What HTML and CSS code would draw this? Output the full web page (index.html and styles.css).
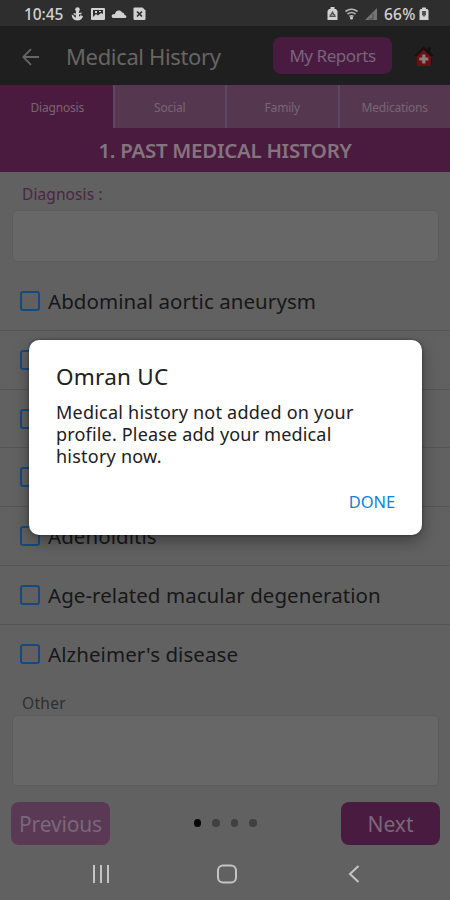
FILE: index.html
```html
<!DOCTYPE html>
<html lang="en">
<head>
<meta charset="utf-8">
<title>Medical History</title>
<link rel="stylesheet" href="styles.css">
</head>
<body>
<div class="phone">
  <div class="status">
    <span class="time">10:45</span>
    <svg class="st-left" width="80" height="16" viewBox="0 0 80 16" fill="#d2d2d2">
      <circle cx="7.500" cy="3.500" r="2.300"/><path d="M6 4h3v3l2.500-.5v1.500L9 8.500v2l1.500-.5-.3-1.500 2.800 2-.5 1c-1 2-2.500 3-5 3s-4.500-1-5.500-3.500l-.3-2.500 2.800 1.500-.5 1 2 .5-.3-2.500-2-.5v-1.500l2.300.5z"/>
      <path fill-rule="evenodd" d="M22 2h12a1 1 0 0 1 1 1v10a1 1 0 0 1-1 1H22a1 1 0 0 1-1-1V3a1 1 0 0 1 1-1zm1 2v7l3-3 2 1.500L31 7l2 1V4zm2 1h2v2h-2zm4 0h2v1h-2z"/>
      <path d="M43 12a2 2 0 0 1-.5-3.500l2.500-.5c.5-4 5.500-4.500 7-1.500 2 0 2.500 1.500 2.500 2.500 2.500.2 2.500 3 .5 3z"/>
      <path d="M64.500 1.500h8l3 3V13a1 1 0 0 1-1 1h-10a1 1 0 0 1-1-1V2.500a1 1 0 0 1 1-1z"/>
      <path d="m67 5.500 5 5m0-5-5 5" stroke="#2e2e2e" stroke-width="1.700"/>
    </svg>
    <svg class="st-right" width="52" height="16" viewBox="0 0 52 16" fill="#d2d2d2">
      <path d="M3 3h1.500V1h4v2H10l1.500 2v9h-10V5z"/><path d="M4 10.500 6.500 6 9 10.500zM3.500 9h6" fill="none" stroke="#555" stroke-width="1.200"/>
      <g fill="none" stroke="#b8b8b8" stroke-width="1.600"><path d="M19.500 5.500q6-4.500 12 0M21.500 8q4-3 8 0M23.500 10.500q2-1.500 4 0"/></g><circle cx="25.500" cy="12" r="1.500"/>
      <path d="M51 2v12H39z" fill="#757575"/><path d="M47 8v5h-4" fill="none" stroke="#4a4a4a"/>
    </svg>
    <span class="pct">66%</span>
    <svg class="batt" width="10" height="14" viewBox="0 0 10 14"><path d="M1.500 2H3V.500h4V2h1.500L9.500 3.500V13h-9V3.500z" fill="#d2d2d2"/><path d="M3 4h4v3.500L5 10 3 7.500z" fill="#555"/></svg>
  </div>
  <header class="bar">
    <svg class="back" width="18" height="18" viewBox="0 0 18 18" fill="none" stroke="#666" stroke-width="1.800"><path d="M17 9H1.500M9 1.200 1.300 9 9 16.800"/></svg>
    <h1>Medical History</h1>
    <button class="reports">My Reports</button>
    <svg class="home" width="20" height="22" viewBox="0 0 20 22"><path d="M9.500.5 0.500 10H2.500v9h15v-9h2L16.500 7V1.500h-3v2.500z" fill="#150f0f"/><path d="m9.500 3.500-8 8h1v7q0 1.500 1.500 1.500h11.500q1.500 0 1.500-1.500v-7h1z" fill="#691012"/><path d="M9.800 8.500v9M5.300 13h9" stroke="#8b7e7e" stroke-width="3.200"/></svg>
  </header>
  <nav class="tabs"><span class="on">Diagnosis</span><span>Social</span><span>Family</span><span>Medications</span></nav>
  <h2><span>1. PAST MEDICAL HISTORY</span></h2>
  <main>
    <label class="lab diag">Diagnosis :</label>
    <div class="field"></div>
    <ul>
      <li><i></i><span>Abdominal aortic aneurysm</span></li>
      <li><i></i></li>
      <li><i></i></li>
      <li><i></i></li>
      <li><i></i><span>Adenoiditis</span></li>
      <li><i></i><span>Age-related macular degeneration</span></li>
      <li><i></i><span>Alzheimer's disease</span></li>
    </ul>
    <label class="lab other">Other</label>
    <div class="field tall"></div>
  </main>
  <footer>
    <button class="prev">Previous</button>
    <div class="dots"><b class="cur"></b><b></b><b></b><b></b></div>
    <button class="next">Next</button>
  </footer>
  <div class="sysnav">
    <svg width="18" height="20" viewBox="0 0 18 20" stroke="#c4c4c4" stroke-width="2"><path d="M2 1v18M9 1v18M16 1v18"/></svg>
    <svg class="homekey" width="20" height="20" viewBox="0 0 20 20" fill="none" stroke="#c4c4c4" stroke-width="2"><rect x="1" y="1.500" width="18" height="17" rx="5"/></svg>
    <svg width="12" height="20" viewBox="0 0 12 20" fill="none" stroke="#c4c4c4" stroke-width="2"><path d="M10.500 2 2 10l8.500 8"/></svg>
  </div>
  <div class="dialog">
    <h3>Omran UC</h3>
    <p>Medical history not added on your<br><span class="p2">profile. Please add your medical</span><br>history now.</p>
    <div class="act"><span>DONE</span></div>
  </div>
</div>
</body>
</html>
```
FILE: styles.css
```css
* { box-sizing: border-box; }
body { margin: 0; }
h1, h2, h3, p, ul { margin: 0; padding: 0; font-weight: 400; }
button { border: 0; padding: 0; font: inherit; }
.phone { position: relative; width: 450px; height: 900px; overflow: hidden; display: flex; flex-direction: column; background: #616161; font-family: "Noto Sans", sans-serif; white-space: nowrap; }
.status { height: 26px; flex: none; background: #2e2e2e; display: flex; align-items: center; padding: 2px 0 0 24px; color: #d2d2d2; font-size: 15.500px; font-weight: 500; }
.time { width: 46px; letter-spacing: -0.1px; }
.st-right { margin-left: 176px; }
.pct { margin-left: 6px; width: 35px; letter-spacing: 0.2px; }
.bar { height: 59px; flex: none; background: #1f1f1f; display: flex; align-items: center; padding: 0 16px 0 22px; color: #666; }
.bar h1 { margin-left: 26px; width: 207px; font-size: 22px; letter-spacing: -0.35px; line-height: 30px; padding-top: 1px; }
.back { position: relative; top: 1px; }
.reports { width: 119px; height: 37px; border-radius: 8px; background: #4a1b40; color: #79657a; font-size: 17px; letter-spacing: -0.45px; }
.home { margin-left: 22px; flex: none; position: relative; top: 1px; }
.tabs { height: 43px; flex: none; display: flex; background: #553850; color: #786575; font-size: 12px; letter-spacing: -0.2px; }
.tabs span { flex: 1; display: flex; align-items: center; justify-content: center; border-left: 2px solid #604760; padding-top: 1px; }
.tabs .on { background: #4a1b3e; border-left-color: #4a1b3e; }
h2 { height: 44px; flex: none; background: #4a1b3e; color: #84747f; font-size: 20.500px; font-weight: 600; line-height: 45px; text-align: center; letter-spacing: -0.3px; }
main { height: 614px; flex: none; }
.lab { display: block; padding-left: 22px; font-size: 15.500px; }
.diag { height: 38px; line-height: 45px; color: #4c2543; letter-spacing: 0.1px; }
.field { height: 52px; margin: 0 11px 0 12px; border: 1px solid #5c5c5c; border-radius: 5px; background: #676767; }
.tall { height: 71px; }
ul { list-style: none; margin-top: 10px; }
li { height: 58.830px; display: flex; align-items: center; padding-left: 20px; font-size: 20.500px; letter-spacing: 0.06px; color: #171717; border-bottom: 1px solid #565656; }
li:last-child { border: 0; }
li i { width: 20px; height: 20px; border: 2px solid #154a80; border-radius: 3px; margin-right: 8px; }
.other { height: 31px; line-height: 38px; color: #2f2f2f; letter-spacing: 0.3px; }
footer { height: 60px; flex: none; padding: 16px 10px 0 11px; display: flex; justify-content: space-between; font-size: 21px; }
footer button { width: 99px; height: 43px; border-radius: 8px; color: #7b677a; background: #4a1b40; }
footer .prev { background: #5a3954; letter-spacing: -0.15px; }
.dots { display: flex; gap: 11px; padding: 17px 0 0; width: 96px; margin-right: 1px; justify-content: center; }
.dots b { flex: none; width: 7.500px; height: 7.500px; border-radius: 50%; background: #404040; }
.dots .cur { background: #080808; }
.sysnav { flex: 1; display: flex; align-items: center; padding: 2px 90px 0 92px; justify-content: space-between; }
.homekey { margin-right: 5px; }
.dialog { position: absolute; left: 29px; top: 340px; width: 393px; height: 195px; border-radius: 10px; background: #fff; box-shadow: 0 6px 16px rgba(0,0,0,.35), 0 0 3px rgba(0,0,0,.4); padding: 20px 27px 0; color: #202020; }
h3 { font-size: 22.500px; line-height: 33px; letter-spacing: 0.25px; }
.dialog p { margin-top: 8px; font-size: 18px; line-height: 22px; letter-spacing: 0.23px; }
.dialog .p2 { letter-spacing: 0.18px; }
.act { margin-top: 23px; text-align: right; line-height: 24px; font-size: 16.500px; letter-spacing: -0.1px; color: #147fd8; }
```
